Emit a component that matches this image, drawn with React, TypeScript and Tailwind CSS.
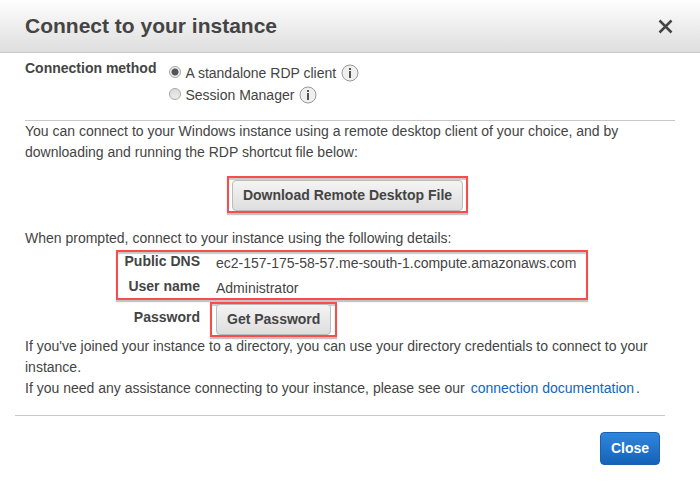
import { useState } from "react";
import type { ReactNode } from "react";

function InfoIcon({ label }: { label: string }) {
  return (
    <svg className="h-[18px] w-[18px]" viewBox="0 0 18 18" role="img" aria-label={label}>
      <circle cx="9" cy="9" r="8" fill="#efefef" stroke="#999" />
      <path d="M8 4h2v2H8zM8 7h2v7H8z" fill="#555" />
    </svg>
  );
}

function Highlight({ className, children }: { className: string; children: ReactNode }) {
  return (
    <div className={`border-2 border-[#f94d4d] shadow-[0_2px_1px_#c4c4c4,inset_0_2px_1px_#c8c8c8] ${className}`}>
      {children}
    </div>
  );
}

function GrayButton({ children }: { children: ReactNode }) {
  return (
    <button
      type="button"
      className="h-[31px] rounded-[4px] border border-[#bbb] bg-linear-to-b from-[#f4f4f4] to-[#dedede] px-[10px] font-bold"
    >
      {children}
    </button>
  );
}

const METHODS = ["A standalone RDP client", "Session Manager"];

export default function App() {
  const [method, setMethod] = useState(METHODS[0]);

  return (
    <main className="bg-white font-['Liberation_Sans',Arial,sans-serif] text-sm leading-[21px] text-[#444]">
      <header className="flex h-[53px] items-center justify-between border-b border-[#c8c8c8] bg-linear-to-b from-[#fefefe] to-[#dedede] pr-[27px] pl-[25px]">
        <h1 className="pb-[2px] text-[21px] font-bold">Connect to your instance</h1>
        <button type="button" aria-label="Close dialog">
          <svg className="h-[15px] w-[15px]" viewBox="0 0 15 15" fill="none" stroke="#444" strokeWidth="2.5">
            <path d="M1.5 1.5l12 12M13.5 1.5l-12 12" />
          </svg>
        </button>
      </header>

      <div className="px-[25px]">
        <fieldset className="flex h-[68px] gap-[13px] border-b border-[#c8c8c8] pt-[5px]">
          <legend className="float-left font-bold">Connection method</legend>
          <div className="pt-[4px]">
            {METHODS.map((name) => (
              <div key={name} className="flex h-[22px] items-center gap-[5px]">
                <label className="flex items-center gap-1">
                  <input
                    type="radio"
                    name="method"
                    checked={method === name}
                    onChange={() => setMethod(name)}
                    className="mb-[3px] h-3 w-3 appearance-none rounded-full border border-[#a6a6a6] bg-linear-to-b from-[#dcdcdc] to-[#ececec] checked:bg-[radial-gradient(circle,#555_0_3px,#eee_4px)]"
                  />
                  {name}
                </label>
                <InfoIcon label={`About ${name}`} />
              </div>
            ))}
          </div>
        </fieldset>

        <p>
          You can connect to your Windows instance using a remote desktop client of your choice, and by downloading and
          running the RDP shortcut file below:
        </p>
        <div className="flex justify-center pt-[13px] pr-[5px] pb-[15px]">
          <Highlight className="px-[3px] pt-[2px]">
            <GrayButton>Download Remote Desktop File</GrayButton>
          </Highlight>
        </div>

        <p>When prompted, connect to your instance using the following details:</p>
        <Highlight className="mt-px ml-[91px] w-[472px] pb-px">
          <dl className="grid grid-cols-[82px_1fr] gap-x-4 gap-y-[5px] leading-[18px]">
            <dt className="text-right font-bold">Public DNS</dt>
            <dd className="pt-[2px]">ec2-157-175-58-57.me-south-1.compute.amazonaws.com</dd>
            <dt className="text-right font-bold">User name</dt>
            <dd className="pt-[2px]">Administrator</dd>
          </dl>
        </Highlight>
        <div className="-mb-px mt-[2px] flex gap-[10px]">
          <span className="w-[175px] pt-[5px] text-right font-bold">Password</span>
          <Highlight className="px-[4px]">
            <GrayButton>Get Password</GrayButton>
          </Highlight>
        </div>

        <p>
          If you've joined your instance to a directory, you can use your directory credentials to connect to your
          instance.
        </p>
        <p>
          If you need any assistance connecting to your instance, please see our{" "}
          <a href="#documentation" className="px-[2px] text-[#1166bb]">
            connection documentation
          </a>
          .
        </p>
      </div>

      <footer className="mt-4 mr-[35px] ml-[15px] flex justify-end border-t border-[#c8c8c8] pt-4 pr-[5px] pb-5">
        <button
          type="button"
          className="h-[33px] rounded-[4px] border border-[#1a62b0] bg-linear-to-b from-[#2f86dd] to-[#1463b8] px-[10px] font-bold text-white"
        >
          Close
        </button>
      </footer>
    </main>
  );
}
